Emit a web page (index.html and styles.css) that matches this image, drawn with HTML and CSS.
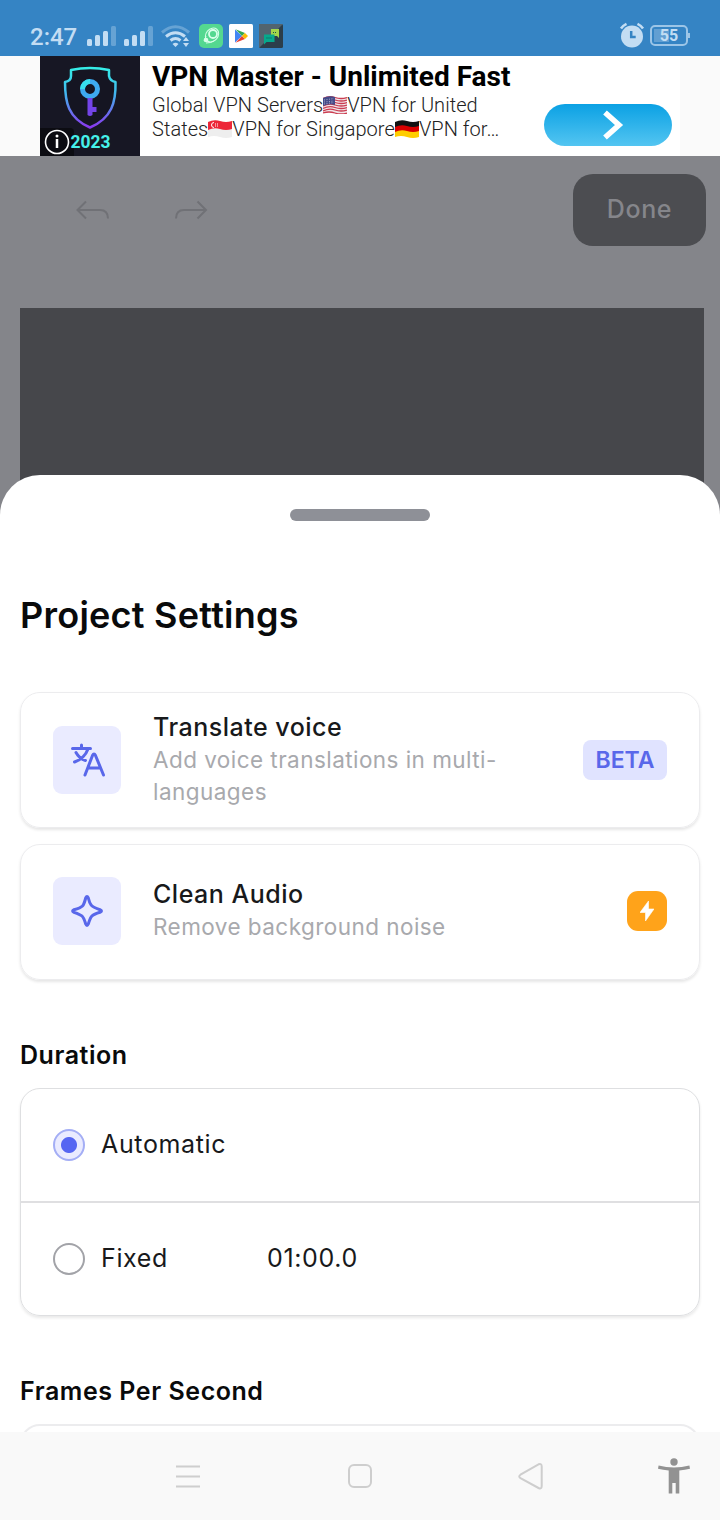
FILE: index.html
```html
<!DOCTYPE html>
<html lang="en">
  <head>
    <title>Project Settings</title>
    <meta charset="utf-8">
    <meta name="viewport" content="width=device-width, initial-scale=1">
    <link rel="stylesheet" href="styles.css">
  </head>

  <body>
    <div class="screen">

      <header class="status">
        <time class="clock">2:47</time>
        <svg class="signal" width="30" height="22" viewBox="0 0 30 22">
          <rect x="0" y="14" width="5" height="7" rx="1.5"/>
          <rect x="8" y="10" width="5" height="11" rx="1.5"/>
          <rect x="16" y="6" width="5" height="15" rx="1.5"/>
          <rect class="faint" x="24" y="1" width="5" height="20" rx="1.5"/>
        </svg>
        <svg class="signal second" width="30" height="22" viewBox="0 0 30 22">
          <rect x="0" y="14" width="5" height="7" rx="1.5"/>
          <rect x="8" y="10" width="5" height="11" rx="1.5"/>
          <rect x="16" y="6" width="5" height="15" rx="1.5"/>
          <rect class="faint" x="24" y="1" width="5" height="20" rx="1.5"/>
        </svg>
        <svg class="wifi" width="30" height="24" viewBox="0 0 30 24">
          <path class="faint" d="M1 8.500Q14.500-3 28 8.500"/>
          <path d="M5 12.500Q14.500 5 24 12.500"/>
          <path d="M9.500 16.500Q14.500 12.500 19.500 16.500"/>
          <path class="solid" d="M11.500 20q3-2.500 6 0l-3 3zM22 17l3-4 3 4zM22 19l3 4 3-4z"/>
        </svg>
        <svg class="app" width="24" height="24" viewBox="0 0 24 24">
          <rect width="24" height="24" rx="5" fill="#54d890"/>
          <g fill="none" stroke="#d8ffea">
            <ellipse cx="13" cy="11" rx="7.500" ry="6" stroke-width="1" transform="rotate(-50 13 11)"/>
            <circle cx="14" cy="10" r="4" stroke-width="1.800"/>
            <path d="M5 17q1-1 2-5m0 7q5 0 8-2" stroke-width="1"/>
          </g>
          <circle cx="7" cy="16" r="2.300" fill="#d8ffea"/>
        </svg>
        <svg class="app" width="24" height="24" viewBox="0 0 24 24">
          <rect width="24" height="24" rx="1.500" fill="#fff"/>
          <path fill="#4285f4" d="M6 5.500L13 12l-7 6.500z"/>
          <path fill="#ea4335" d="M6.500 18.800L13 12l3 3z"/>
          <path fill="#34a853" d="M6.500 5.200L13 12l3-3z"/>
          <path fill="#fbbc04" d="M16 9l3 3-3 3-3-3z"/>
        </svg>
        <svg class="app" width="24" height="24" viewBox="0 0 24 24">
          <rect width="24" height="24" rx="1.500" fill="#2c3e4a"/>
          <path fill="#52646f" d="M0 0h24L0 24z"/>
          <path fill="#a2d64a" d="M12 5h8v9l-2-2h-6z"/>
          <path fill="#06a98c" d="M5 10.500h10.500v7.500H7.500L5 20.500z"/>
          <path stroke="#174f50" stroke-dasharray="1 1" d="M7.500 14h5.500M14 8.500h4"/>
        </svg>
        <svg class="alarm" width="26" height="26" viewBox="0 0 26 26">
          <circle cx="13" cy="14.500" r="11"/>
          <path class="ring" d="M2 6.500Q4 3.500 7.500 1.800M24 6.500Q22 3.500 18.500 1.800"/>
          <path class="hands" d="M12.200 9v6h4.500"/>
        </svg>
        <div class="battery">55</div>
      </header>

      <div class="ad">
        <div class="ad-body">
          <svg class="ad-logo" width="100" height="100" viewBox="0 0 100 100">
            <defs>
              <linearGradient id="neon" x1="0" y1="0" x2="0" y2="1">
                <stop offset="0" stop-color="#35eee8"/>
                <stop offset=".45" stop-color="#43b2ed"/>
                <stop offset="1" stop-color="#8938ee"/>
              </linearGradient>
            </defs>
            <rect width="100" height="100" fill="#171724"/>
            <path d="M31 14Q50 10 69 14V20Q70 25 75.500 26C76 46 72 62 50 71.500C28 62 25 46 25 26Q31 25 31 20z" fill="#151522" stroke="url(#neon)" stroke-width="2.500" stroke-linejoin="round"/>
            <circle cx="50" cy="33" r="7.500" fill="none" stroke="#3eaaf0" stroke-width="5"/>
            <path d="M42.500 33a7.500 7.500 0 0 1 7.500-7.500" fill="none" stroke="#37e0ec" stroke-width="5"/>
            <path d="M47.500 42h5v9h4v5h-4v3q-2.500 2-5 0z" fill="#7444e8"/>
            <path d="M0 72h30q4 0 4 4v24H0z" fill="#0c0c12"/>
            <text x="30.500" y="92" textLength="40" lengthAdjust="spacingAndGlyphs">2023</text>
            <circle cx="17" cy="86" r="11.500" fill="none" stroke="#fff" stroke-width="1.600"/>
            <path d="M17 83v9" fill="none" stroke="#fff" stroke-width="2.500"/>
            <circle cx="17" cy="80" r="1.500" fill="#fff"/>
          </svg>
          <div class="ad-text">
            <h2>VPN Master - Unlimited Fast</h2>
            <p>Global VPN Servers<svg class="flag" width="24" height="18" viewBox="0 0 24 18"><path fill="#f1e5e8" d="M0 2Q6-1 12 1T24 1V17Q18 19 12 17T0 17z"/><path fill="none" stroke="#ca3c50" stroke-width="1.300" d="M0 2.500Q6-.5 12 1.500T24 1.500M0 5Q6 2 12 4T24 4M0 7.500Q6 4.500 12 6.500T24 6.500M0 10Q6 7 12 9T24 9M0 12.500Q6 9.500 12 11.500T24 11.500M0 15Q6 12 12 14T24 14M0 17Q6 15 12 17T24 17"/><path fill="#454b89" d="M0 2Q6-1 12 1v8Q6 7 0 10z"/><path stroke="#a9abc9" stroke-dasharray="1 1.500" d="M1 4l10-1.500M1 6l10-1M1 8l10-1.500"/></svg>VPN for United<br>
            States<svg class="flag" width="24" height="18" viewBox="0 0 24 18"><path fill="#eee" d="M0 2Q6-1 12 1T24 1V17Q18 19 12 17T0 17z"/><path fill="#ed2638" d="M0 2Q6-1 12 1T24 1V9Q18 11 12 9T0 10z"/><path fill="none" stroke="#fff" d="M6 2.500a2.500 2.500 0 1 0 0 5"/><path stroke="#fff" stroke-dasharray="1 1" d="M7 4h3M7 6h3"/></svg>VPN for Singapore<svg class="flag" width="24" height="18" viewBox="0 0 24 18"><path fill="#111" d="M0 2Q6-1 12 1T24 1V7H0z"/><path fill="#d80000" d="M0 7Q6 4 12 6T24 6V12H0z"/><path fill="#ffcd00" d="M0 12Q6 9 12 11T24 11V17Q18 19 12 17T0 17z"/></svg>VPN for…</p>
          </div>
          <div class="ad-button">
            <svg width="24" height="32" viewBox="0 0 24 32"><path d="M4 3.500L18 16 4 28.500" fill="none" stroke="#fff" stroke-width="5.500"/></svg>
          </div>
        </div>
      </div>

      <main class="editor">
        <div class="toolbar">
          <svg class="undo" width="34" height="20" viewBox="0 0 34 20"><path d="M10 1.500L1.500 10l8.500 8.500M2 10h22q8 0 8 8.500"/></svg>
          <svg class="redo" width="34" height="20" viewBox="0 0 34 20"><path d="M23.500 1.500l8.500 8.500-8.500 8.500M31.500 10H10Q2 10 2 18.500"/></svg>
          <button class="done">Done</button>
        </div>
        <div class="preview"></div>
      </main>

      <section class="sheet">
        <div class="handle"></div>
        <h1>Project Settings</h1>

        <div class="cards">
          <div class="card translate">
            <div class="tile">
              <svg width="36" height="34" viewBox="0 0 36 34">
                <path d="M3.500 5.500h18M12.500 2v3.500M19 6Q15.500 15.500 5.500 19M7 9.500Q10.500 16 16.500 17.500M16 32L23.500 12.500Q25 9.500 26.500 12.500L34.500 32M19 25H31.500"/>
              </svg>
            </div>
            <div class="card-text">
              <h3>Translate voice</h3>
              <p>Add voice translations in multi-<br>languages</p>
            </div>
            <span class="beta">BETA</span>
          </div>

          <div class="card clean">
            <div class="tile">
              <svg width="34" height="34" viewBox="0 0 34 34">
                <path d="M15.700 4Q17 1.200 18.300 4Q19.500 9 21.200 11.200Q23 13.500 30 15.700Q33 17 30 18.300Q24 20 22 22Q20.500 23 18.300 30Q17 33 15.700 30Q14 24 12 22Q10.500 20.500 4 18.300Q1.200 17 4 15.700Q10.500 14 12.500 12Q14 10.500 15.700 4z"/>
              </svg>
            </div>
            <div class="card-text">
              <h3>Clean Audio</h3>
              <p>Remove background noise</p>
            </div>
            <div class="bolt">
              <svg width="14" height="20" viewBox="0 0 14 20"><path d="M8.500 0v8H14L5.500 20v-8.500H0z" fill="#fff" stroke="#fff" stroke-width=".6" stroke-linejoin="round"/></svg>
            </div>
          </div>
        </div>

        <h2 class="label">Duration</h2>
        <div class="options">
          <div class="option">
            <span class="radio checked"></span>
            <span class="option-name">Automatic</span>
          </div>
          <div class="option">
            <span class="radio"></span>
            <span class="option-name fixed">Fixed</span>
            <span class="option-name time">01:00.0</span>
          </div>
        </div>

        <h2 class="label">Frames Per Second</h2>
        <div class="options fps"></div>
      </section>

      <nav class="navbar">
        <svg width="28" height="28" viewBox="0 0 28 28"><path d="M2 4.500h24M2 14.500h24M2 24.500h24"/></svg>
        <svg width="28" height="28" viewBox="0 0 28 28"><rect x="3" y="3" width="22" height="22" rx="5"/></svg>
        <svg width="28" height="28" viewBox="0 0 28 28"><path d="M21.500 2.300Q24.700 1 24.700 4.500V24Q24.700 27.500 21.500 26L3.500 16.200Q1 14.500 3.500 12.700z"/></svg>
        <svg class="person" width="32" height="36" viewBox="0 0 32 36"><circle cx="16" cy="4" r="3.700"/><path d="M.6 7.500Q16 11.500 31.400 7.500l.6 3.300Q27 12 21.300 12.600V35.500h-3.600V25h-3.400v10.500h-3.600V12.600Q5 12 0 10.800z"/></svg>
      </nav>

    </div>
  </body>
</html>
```
FILE: styles.css
```css
html, body {
  margin: 0;
  height: 100%;
  overflow: hidden;
}

* {
  box-sizing: border-box;
  margin: 0;
  padding: 0;
}

body {
  font-family: Inter, sans-serif;
  background: #fff;
}

svg {
  display: block;
  flex: none;
}

.screen {
  width: 720px;
  height: 1520px;
  display: flex;
  flex-direction: column;
  overflow: hidden;
  white-space: nowrap;
}

/* status bar */
.status {
  height: 56px;
  flex: none;
  display: flex;
  align-items: center;
  padding: 16px 30px 0;
  background: #3584c4;
  color: #c3ddf3;
}

.clock {
  width: 57px;
  font: 500 24px/30px Roboto, sans-serif;
  padding-top: 1px;
}

.signal {
  fill: #c3ddf3;
}

.signal.second {
  margin-left: 7px;
}

.faint {
  opacity: 0.35;
}

.wifi {
  margin: 0 8px 0 7px;
  fill: none;
  stroke: #c3ddf3;
  stroke-width: 3;
}

.wifi .solid {
  fill: #c3ddf3;
  stroke: none;
}

.app {
  margin-right: 6px;
}

.alarm {
  margin: -2px 5px 0 auto;
  fill: #c3ddf3;
}

.alarm .ring {
  fill: none;
  stroke: #c3ddf3;
  stroke-width: 2.5;
}

.alarm .hands {
  fill: none;
  stroke: #3584c4;
  stroke-width: 2.5;
}

.battery {
  position: relative;
  width: 38px;
  height: 21px;
  margin: -1px 2px 0 0;
  border: 2px solid #9cc5e7;
  border-radius: 5px;
  background: linear-gradient(#629fd2, #629fd2) 2px 2px / 15px 13px no-repeat;
  font: 700 16px/17px Roboto, sans-serif;
  text-align: center;
}

.battery::after {
  content: "";
  position: absolute;
  right: -4px;
  top: 6px;
  width: 2px;
  height: 5px;
  background: #9cc5e7;
}

/* banner */
.ad {
  height: 100px;
  flex: none;
  padding: 0 40px;
  background: #fafafa;
}

.ad-body {
  display: flex;
  height: 100px;
  background: #fff;
  font-family: Roboto, sans-serif;
}

.ad-logo text {
  font: 700 18px Roboto, sans-serif;
  fill: #46f0ea;
}

.ad-text {
  flex: 1;
  padding: 4px 0 0 12px;
}

.ad-text h2 {
  font-size: 28px;
  line-height: 33px;
  font-weight: 700;
  color: #000;
}

.ad-text p {
  font-size: 20px;
  line-height: 24px;
  font-weight: 300;
  letter-spacing: 0.06px;
  color: #222;
}

.flag {
  display: inline-block;
  vertical-align: -2px;
}

.ad-button {
  display: flex;
  align-items: center;
  justify-content: center;
  width: 128px;
  height: 42px;
  margin: 48px 8px 0 0;
  padding-left: 10px;
  border-radius: 21px;
  background: linear-gradient(#0ba1e4, #53c5f1);
}

/* dimmed editor behind the sheet */
.editor {
  height: 364px;
  flex: none;
  background: #84858a;
}

.toolbar {
  display: flex;
  height: 152px;
  padding: 18px 14px 0 76px;
}

.undo,
.redo {
  margin-top: 26px;
  fill: none;
  stroke: #707176;
  stroke-width: 2;
}

.redo {
  margin-left: 64px;
}

.done {
  width: 133px;
  height: 72px;
  margin-left: auto;
  padding-bottom: 2px;
  border: 0;
  border-radius: 20px;
  background: #4c4d51;
  color: #85868b;
  font: 500 25px Inter, sans-serif;
  letter-spacing: 0.6px;
}

.preview {
  height: 212px;
  margin: 0 16px 0 20px;
  background: #46474b;
}

/* sheet */
.sheet {
  position: relative;
  height: 957px;
  flex: none;
  margin-top: -45px;
  padding: 34px 20px 0;
  border-radius: 40px 40px 0 0;
  background: #fff;
  overflow: hidden;
  color: #18191b;
}

.handle {
  width: 140px;
  height: 12px;
  margin: 0 auto;
  border-radius: 6px;
  background: #8e9097;
}

h1 {
  margin-top: 72px;
  font-size: 36px;
  line-height: 44px;
  font-weight: 600;
  letter-spacing: 0.25px;
  color: #090a0b;
}

.cards {
  display: flex;
  flex-direction: column;
  gap: 16px;
  margin-top: 55px;
}

.card {
  display: flex;
  align-items: center;
  height: 136px;
  padding: 0 32px;
  border: 1px solid #ececee;
  border-radius: 20px;
  box-shadow: 0 2px 3px rgba(0, 0, 0, 0.1);
}

.card.clean {
  padding-bottom: 2px;
}

.tile {
  display: flex;
  align-items: center;
  justify-content: center;
  width: 68px;
  height: 68px;
  margin-right: 32px;
  border-radius: 9px;
  background: #eaebff;
}

.tile path {
  fill: none;
  stroke: #5967ea;
  stroke-width: 3;
  stroke-linecap: round;
  stroke-linejoin: round;
}

.card-text {
  flex: 1;
  padding-bottom: 2px;
}

.card-text h3 {
  font-size: 25px;
  line-height: 34px;
  font-weight: 500;
  letter-spacing: 0.5px;
}

.card-text p {
  font-size: 22.5px;
  line-height: 32px;
  letter-spacing: 0.45px;
  color: #a8a9ad;
}

.beta {
  width: 84px;
  height: 40px;
  border-radius: 8px;
  background: #e0e3ff;
  color: #5967ea;
  font-size: 23px;
  line-height: 40px;
  font-weight: 600;
  text-align: center;
}

.bolt {
  display: flex;
  align-items: center;
  justify-content: center;
  width: 40px;
  height: 40px;
  border-radius: 11px;
  background: #ffa31a;
}

.label {
  margin: 60px 0 18px;
  font-size: 25px;
  line-height: 30px;
  font-weight: 600;
  letter-spacing: 0.55px;
  color: #090a0b;
}

.options {
  height: 228px;
  border: 1px solid #dedfe1;
  border-radius: 20px;
  box-shadow: 0 2px 3px rgba(0, 0, 0, 0.09);
}

.option {
  display: flex;
  align-items: center;
  height: 112px;
  padding: 0 32px;
  font-size: 25px;
  line-height: 34px;
}

.option + .option {
  height: 114px;
  border-top: 2px solid #dfdfe1;
}

.radio {
  width: 32px;
  height: 32px;
  margin-right: 16px;
  border: 2px solid #a2a3a8;
  border-radius: 50%;
}

.radio.checked {
  border-color: #a4aef5;
  background: radial-gradient(circle, #5666f2 7.5px, #eaebff 8.5px);
}

.option-name {
  padding-bottom: 2px;
  letter-spacing: 0.65px;
}

.fixed {
  width: 166px;
}

.fps {
  border: 2px solid #ececee;
}

/* system navigation */
.navbar {
  height: 88px;
  flex: none;
  display: grid;
  grid-template-columns: 172px 172px 170px 104px;
  align-items: center;
  justify-items: center;
  padding-left: 102px;
  background: #f9f9f9;
}

.navbar svg {
  fill: none;
  stroke: #cecece;
  stroke-width: 2;
}

.navbar .person {
  margin-left: 12px;
  fill: #929292;
  stroke: none;
}
```
